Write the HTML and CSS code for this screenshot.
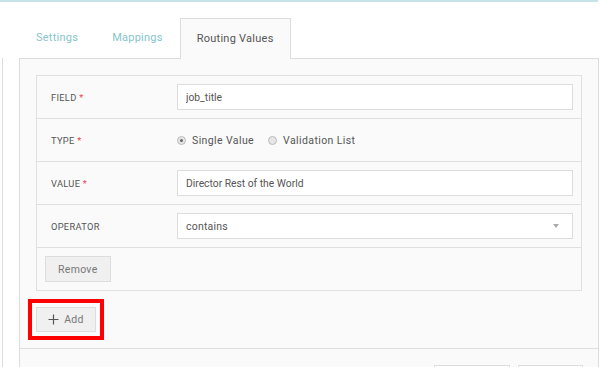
FILE: index.html
```html
<!DOCTYPE html>
<html lang="en">
<head>
<meta charset="UTF-8" />
<meta name="viewport" content="width=device-width, initial-scale=1" />
<title>Routing Values</title>
<link rel="stylesheet" href="styles.css">
</head>
<body>
  <div class="topbar"></div>
  <div class="page">
    <div class="sidebar"></div>

    <div class="tabs-wrap">
      <ul class="tabs">
        <li class="tab">Settings</li>
        <li class="tab">Mappings</li>
        <li class="tab active">Routing Values</li>
      </ul>

      <div class="panel">
        <div class="panel-body">
          <div class="rule">
            <div class="row">
              <label class="label">FIELD <span class="req">*</span></label>
              <input class="control" value="job_title" />
            </div>
            <div class="row">
              <label class="label">TYPE <span class="req">*</span></label>
              <div class="radios">
                <label class="radio"><span class="dot checked"></span>Single Value</label>
                <label class="radio"><span class="dot"></span>Validation List</label>
              </div>
            </div>
            <div class="row">
              <label class="label">VALUE <span class="req">*</span></label>
              <input class="control" value="Director Rest of the World" />
            </div>
            <div class="row">
              <label class="label">OPERATOR</label>
              <div class="control select">contains<span class="caret"></span></div>
            </div>
            <div class="row row-actions">
              <button class="btn">Remove</button>
            </div>
          </div>

          <button class="btn btn-add">
            <svg class="plus" width="11" height="11" viewBox="0 0 11 11"><path d="M5.5 0.5v10M0.5 5.5h10" stroke="#555" stroke-width="1.2" fill="none"/></svg>
            Add
          </button>
        </div>

        <div class="panel-footer">
          <button class="btn btn-foot wide"></button>
          <button class="btn btn-foot"></button>
        </div>
      </div>
    </div>
  </div>
</body>
</html>
```

FILE: styles.css
```css
html, body { margin: 0; padding: 0; background: #fff; font-family: Roboto, "Liberation Sans", sans-serif; color: #555; overflow: hidden; height: 367px; }
.topbar { width: 598px; height: 2px; background: #c6e4e7; }
.page { display: flex; height: 365px; overflow: hidden; }
.sidebar { width: 2px; margin-top: 56px; border-right: 1px solid #ddd; }
.tabs-wrap { margin-left: 16px; width: 580px; }

.tabs { list-style: none; margin: 16px 0 0; padding: 0; display: flex; height: 40px; position: relative; z-index: 1; }
.tab { padding: 0 17px; line-height: 40px; font-size: 11px; letter-spacing: 0.25px; color: #86c5ca; }
.tab.active { color: #555; background: #fafafa; border: 1px solid #ddd; border-bottom: none; padding: 0 16px; height: 41px; box-sizing: border-box; margin-bottom: -1px; }

.panel { border: 1px solid #ddd; border-bottom: none; background: #fafafa; }
.panel-body { padding: 16px; border-bottom: 1px solid #ddd; }

.rule { border: 1px solid #e0e0e0; }
.row { display: flex; align-items: center; height: 42px; border-bottom: 1px solid #e0e0e0; padding: 0 8px 0 14px; }
.row:last-child { border-bottom: none; }
.row-actions { padding-left: 8px; }
.label { width: 126px; font-size: 9.3px; letter-spacing: 0.3px; color: #555; }
.req { color: #e8454f; }

.control { flex: 1; height: 26px; box-sizing: border-box; border: 1px solid #ddd; background: #fff; padding: 0 8px; font-family: inherit; font-size: 10.3px; color: #555; outline: none; }
.select { display: flex; align-items: center; justify-content: space-between; font-size: 10.5px; letter-spacing: 0.2px; }
.caret { width: 0; height: 0; border-left: 3.5px solid transparent; border-right: 3.5px solid transparent; border-top: 4px solid #aaa; margin-right: 5px; }

.radios { display: flex; gap: 14px; font-size: 10.5px; letter-spacing: 0.4px; }
.radio { display: flex; align-items: center; }
.dot { width: 7px; height: 7px; border-radius: 50%; border: 1px solid #bbb; background: #e6e6e6; margin-right: 6px; position: relative; }
.dot.checked::after { content: ""; position: absolute; left: 2px; top: 2px; width: 3px; height: 3px; border-radius: 50%; background: #666; }

.btn { height: 26px; box-sizing: border-box; border: 1px solid #ddd; background: #f0f0f0; color: #777; font-family: inherit; font-size: 10.5px; letter-spacing: 0.3px; padding: 0 12px; }
.btn-add { display: flex; align-items: center; justify-content: center; gap: 5px; margin-top: 16px; height: 25px; width: 60px; padding: 0; outline: 4px solid #f00; outline-offset: 4px; }

.panel-footer { height: 19px; display: flex; justify-content: flex-end; gap: 8px; padding: 16px 15px 0 0; box-sizing: border-box; overflow: visible; }
.btn-foot { flex: none; width: 65px; background: #fff; }
.btn-foot.wide { width: 76px; }
```
